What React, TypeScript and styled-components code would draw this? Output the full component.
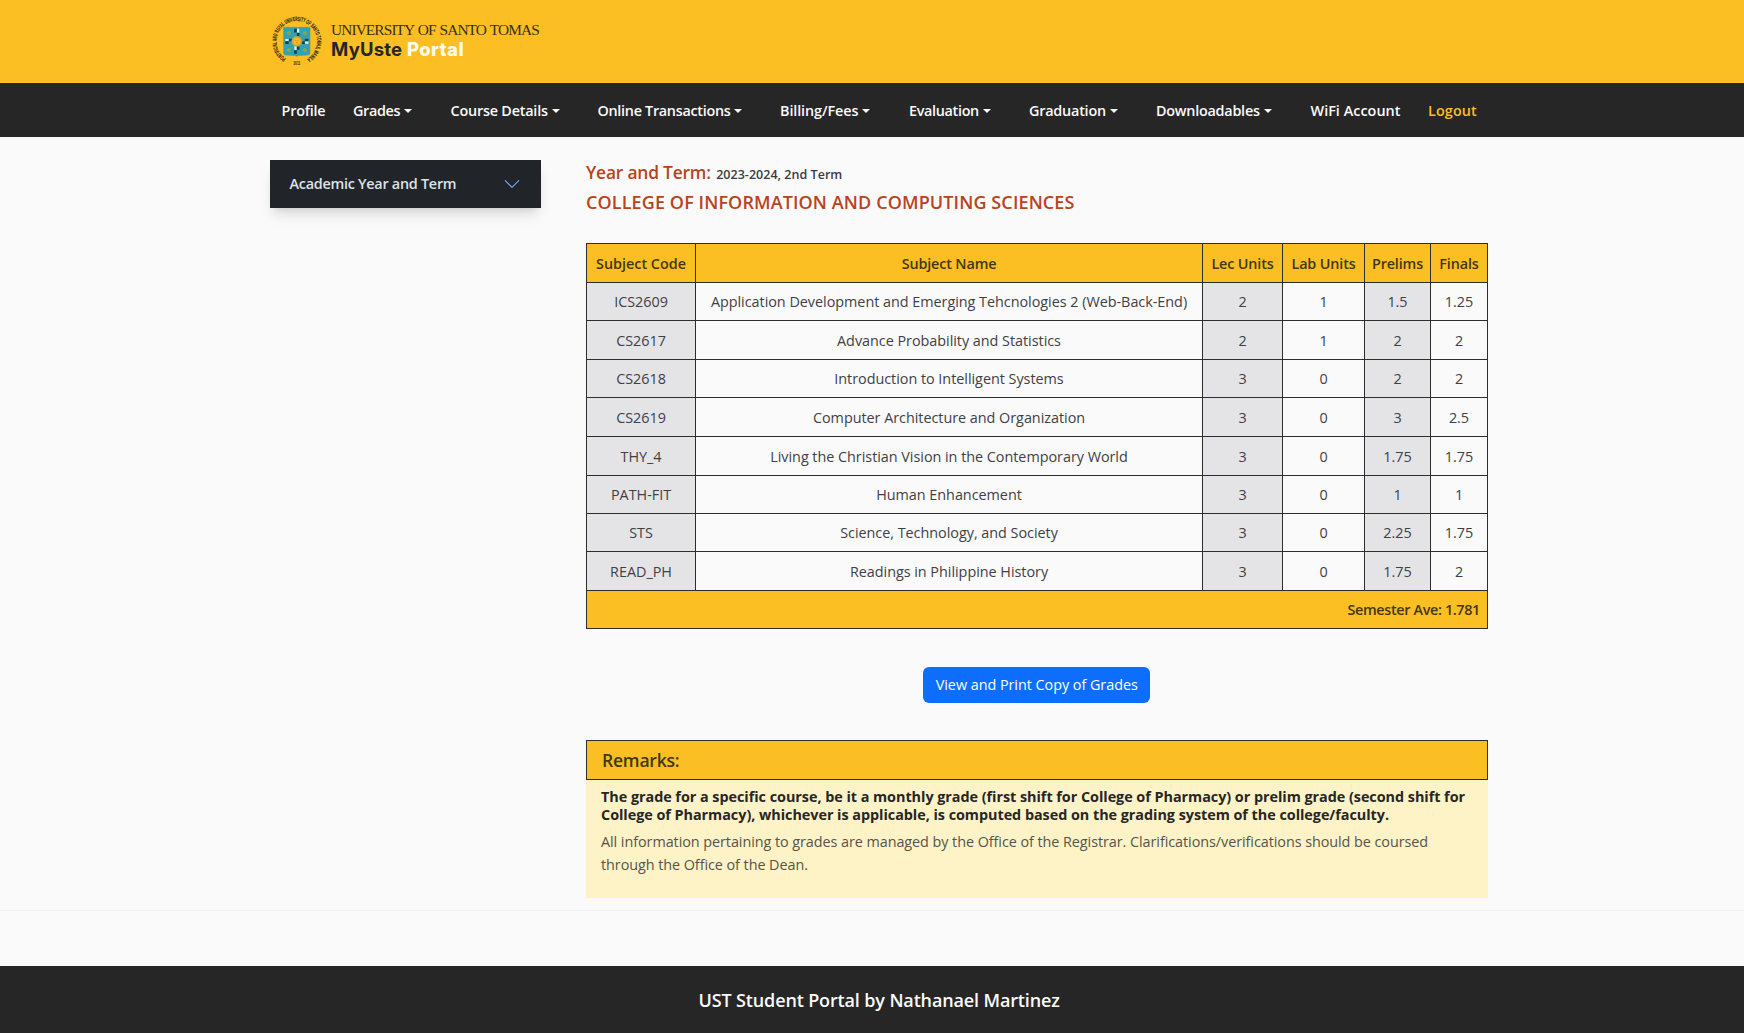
import React from 'react';
import styled, { createGlobalStyle } from 'styled-components';

const amber = '#fbbf24';
const ink = '#262626';
const line = '#2f2d29';

const GlobalStyle = createGlobalStyle`
  *, *::before, *::after { box-sizing: border-box; }
  body {
    margin: 0;
    background: #fafafa;
    color: #3f3f46;
    font: 400 14.4px/22.5px "Open Sans", "Noto Sans", sans-serif;
  }
  h1, h2, h3, p { margin: 0; font: inherit; }
`;

const Page = styled.div`
  display: flex;
  flex-direction: column;
  min-height: 1033px;
`;

const Container = styled.div`
  width: 1217.5px;
  margin-left: 270px;
`;

const Header = styled.header`
  height: 82.5px;
  background: ${amber};
`;

const Brand = styled(Container)`
  display: flex;
  padding-top: 15px;
`;

const BrandText = styled.div`
  display: flex;
  flex-direction: column;
  padding: 5.5px 0 0 8px;
`;

const University = styled.span`
  font: 400 15.4px/17px "Liberation Serif", serif;
  letter-spacing: -0.9px;
  word-spacing: 1px;
  white-space: nowrap;
  color: #3b300f;
`;

const PortalName = styled.h1`
  font: 700 18.5px/22px Inter, "Open Sans", sans-serif;
  letter-spacing: 0.2px;
  color: ${ink};
`;

const PortalAccent = styled.span`
  color: #fffbeb;
  font-weight: 800;
  letter-spacing: 0.4px;
`;

const Nav = styled.nav`
  height: 54.5px;
  background: ${ink};
`;

const NavGrid = styled(Container)`
  display: grid;
  grid-template-columns: 71.5px 97.5px 147px 182.5px 129px 120px 127px 154.5px 117.5px 1fr;
  padding: 16.5px 0 0 11.5px;
`;

const NavItem = styled.a<{ $menu?: boolean; $accent?: boolean; $track: number }>`
  display: flex;
  align-items: center;
  padding-top: ${p => (p.$menu ? 1 : 0)}px;
  color: ${p => (p.$accent ? amber : '#fafafa')};
  font-weight: 600;
  line-height: 22px;
  letter-spacing: ${p => p.$track}px;
  white-space: nowrap;
`;

const Caret = styled.span`
  margin: -1px 0 0 4px;
  border: 4px solid transparent;
  border-top-color: currentColor;
  border-bottom: 0;
`;

const Main = styled(Container)`
  display: grid;
  grid-template-columns: 271px 901.5px;
  justify-content: space-between;
  align-items: start;
  height: 773px;
  padding-top: 22.5px;
`;

const TermToggle = styled.button`
  display: flex;
  align-items: center;
  justify-content: space-between;
  height: 48.5px;
  padding: 0 20px 0 19.5px;
  border: 0;
  background: #212529;
  color: #dee2e6;
  font: 600 14.4px/22px "Open Sans", "Noto Sans", sans-serif;
  letter-spacing: -0.26px;
  box-shadow: 0 9px 14px -3px rgba(0, 0, 0, 0.13), 0 4px 6px -4px rgba(0, 0, 0, 0.12);
`;

const Content = styled.section`
  display: flex;
  flex-direction: column;
`;

const TermLine = styled.h2`
  height: 24px;
  color: #b9431c;
  font-size: 17.4px;
  font-weight: 600;
  line-height: 24px;
  letter-spacing: -0.2px;
`;

const TermValue = styled.span`
  margin-left: 1px;
  color: #3b3b40;
  font-size: 12.5px;
  line-height: 1;
  letter-spacing: 0.03px;
`;

const College = styled.h2`
  margin: 6px 0 29.5px;
  color: #b9431c;
  font-size: 18px;
  font-weight: 600;
  line-height: 24px;
  letter-spacing: 0.11px;
  white-space: nowrap;
`;

const GradeTable = styled.div`
  display: grid;
  grid-template-columns: 109px 507px 80px 82px 66px 57px;
  grid-template-rows: 39px 38px 39px 38px 39px 39px 38px 38px 39px 38px;
  width: 902px;
  border: solid ${line};
  border-width: 1px 0 0 1px;
`;

const Cell = styled.div<{ $shaded?: boolean }>`
  display: flex;
  align-items: center;
  justify-content: center;
  padding-top: 2px;
  border: solid ${line};
  border-width: 0 1px 1px 0;
  background: ${p => (p.$shaded ? '#e4e4e7' : 'transparent')};
  letter-spacing: -0.03px;
  white-space: nowrap;
`;

const HeadCell = styled(Cell)<{ $track?: number }>`
  background: ${amber};
  color: #443710;
  font-weight: 600;
  letter-spacing: ${p => p.$track ?? -0.15}px;
`;

const AverageCell = styled(HeadCell)`
  grid-column: 1 / -1;
  justify-content: flex-end;
  padding-right: 7px;
`;

const PrintButton = styled.button`
  align-self: center;
  width: 227px;
  height: 36px;
  margin: 38px 0 37px;
  padding: 0;
  border: 0;
  border-radius: 6px;
  background: #0d6efd;
  color: #fff;
  font: 400 14.4px/22px "Open Sans", "Noto Sans", sans-serif;
  letter-spacing: -0.04px;
`;

const RemarksTitle = styled.h3`
  height: 39.5px;
  padding-left: 15px;
  border: 1px solid ${line};
  background: ${amber};
  color: #443710;
  font-size: 17.6px;
  font-weight: 600;
  line-height: 39px;
  letter-spacing: -0.25px;
`;

const RemarksBody = styled.div`
  height: 118.5px;
  padding: 8.5px 0 0 15px;
  background: #fef3c7;
`;

const Rule = styled.strong`
  display: block;
  margin-bottom: 7px;
  color: ${ink};
  font-weight: 700;
  line-height: 18px;
  letter-spacing: -0.037px;
  white-space: nowrap;
`;

const Note = styled.p`
  color: #56534a;
  letter-spacing: -0.062px;
  white-space: nowrap;
`;

const Spacer = styled.div`
  height: 55.5px;
  border-top: 1px solid #f1f1f1;
`;

const Footer = styled.footer`
  flex: 1;
  padding: 22px 0 0 698.5px;
  background: ${ink};
  color: #fafafa;
  font-size: 18px;
  font-weight: 600;
  line-height: 24px;
  letter-spacing: -0.14px;
`;

const navItems = [
  { label: 'Profile', track: -0.2 },
  { label: 'Grades', menu: true, track: -0.37 },
  { label: 'Course Details', menu: true, track: -0.21 },
  { label: 'Online Transactions', menu: true, track: -0.3 },
  { label: 'Billing/Fees', menu: true, track: -0.1 },
  { label: 'Evaluation', menu: true, track: -0.33 },
  { label: 'Graduation', menu: true, track: -0.22 },
  { label: 'Downloadables', menu: true, track: -0.25 },
  { label: 'WiFi Account', track: 0.03 },
  { label: 'Logout', accent: true, track: 0.1 },
];

const grades = [
  ['ICS2609', 'Application Development and Emerging Tehcnologies 2 (Web-Back-End)', '2', '1', '1.5', '1.25'],
  ['CS2617', 'Advance Probability and Statistics', '2', '1', '2', '2'],
  ['CS2618', 'Introduction to Intelligent Systems', '3', '0', '2', '2'],
  ['CS2619', 'Computer Architecture and Organization', '3', '0', '3', '2.5'],
  ['THY_4', 'Living the Christian Vision in the Contemporary World', '3', '0', '1.75', '1.75'],
  ['PATH-FIT', 'Human Enhancement', '3', '0', '1', '1'],
  ['STS', 'Science, Technology, and Society', '3', '0', '2.25', '1.75'],
  ['READ_PH', 'Readings in Philippine History', '3', '0', '1.75', '2'],
];

function Seal() {
  return (
    <svg width="53" height="53" viewBox="-26.8 -26.3 53 53">
      <defs>
        <path id="ring" d="M-10.8 17.2 A20.3 20.3 0 1 1 10.8 17.2" />
      </defs>
      <text fontFamily="Liberation Sans, sans-serif" fontWeight="700" fontSize="6" fill="#33290a" stroke="#33290a" strokeWidth=".15">
        <textPath href="#ring" textLength="105" lengthAdjust="spacingAndGlyphs">
          PONTIFICAL AND ROYAL UNIVERSITY OF SANTO TOMAS, MANILA
        </textPath>
      </text>
      <text x="-3.5" y="24.2" fontFamily="Liberation Sans, sans-serif" fontWeight="700" fontSize="5.4" textLength="7" lengthAdjust="spacingAndGlyphs" fill="#33290a">1611</text>
      <path d="M-13.2 -14 H13.2 V12 Q13.2 13.6 11 13.8 L2 14.2 L0 15 L-2 14.2 L-11 13.8 Q-13.2 13.6 -13.2 12Z" fill="#2fa3b5" stroke="#6f9a5c" strokeWidth=".6" />
      <g fill="#1f3a48">
        <path d="M-2.6 -12.5h2.6v3.6h-2.6zM0 -8.2h2.6v3.2H0zM0 5h2.6v3.4H0zM-2.6 9h2.6v3.4h-2.6zM-11.5 0h3.4v2.6h-3.4zM-8 -2.6h3v2.6h-3zM5 0h3v2.6H5zM8 -2.6h3.6V0H8z" />
      </g>
      <g fill="#e6efe9">
        <path d="M.2 -12.5h2.2v3.8H.2zM-2.4 5h2.2v3.6h-2.2zM-11.5 -2.4h3.3v2.2h-3.3zM8.2 .2h3.4v2.2H8.2z" />
      </g>
      <g fill="#8fa34f">
        <circle cx="-8" cy="-8.4" r="2" />
        <circle cx="8" cy="-8.4" r="2" />
        <circle cx="-8" cy="8.6" r="2" />
        <circle cx="8" cy="8.6" r="2" />
      </g>
      <circle r="4.8" fill="#e9a81f" stroke="#d2a53a" strokeWidth="1.4" strokeDasharray="1 .9" />
      <circle r="3.2" fill="#f5bd2c" />
      <path d="M-1.5 -.8h1M.6 -.8h1M-1 1.4h2" stroke="#b5761a" strokeWidth=".6" />
    </svg>
  );
}

export default function App() {
  return (
    <Page>
      <GlobalStyle />
      <Header>
        <Brand>
          <Seal />
          <BrandText>
            <University>UNIVERSITY OF SANTO TOMAS</University>
            <PortalName>
              MyUste <PortalAccent>Portal</PortalAccent>
            </PortalName>
          </BrandText>
        </Brand>
      </Header>
      <Nav>
        <NavGrid>
          {navItems.map(item => (
            <NavItem key={item.label} $menu={item.menu} $accent={item.accent} $track={item.track}>
              {item.label}
              {item.menu && <Caret />}
            </NavItem>
          ))}
        </NavGrid>
      </Nav>
      <Main>
        <TermToggle>
          Academic Year and Term
          <svg width="18" height="18" viewBox="0 0 16 16" fill="none" stroke="#6ea8fe" strokeLinecap="round" strokeLinejoin="round">
            <path d="M2 5l6 6 6-6" />
          </svg>
        </TermToggle>
        <Content>
          <TermLine>
            Year and Term: <TermValue>2023-2024, 2nd Term</TermValue>
          </TermLine>
          <College>COLLEGE OF INFORMATION AND COMPUTING SCIENCES</College>
          <GradeTable>
            <HeadCell $track={0}>Subject Code</HeadCell>
            <HeadCell>Subject Name</HeadCell>
            <HeadCell>Lec Units</HeadCell>
            <HeadCell>Lab Units</HeadCell>
            <HeadCell>Prelims</HeadCell>
            <HeadCell>Finals</HeadCell>
            {grades.map(row =>
              row.map((value, i) => (
                <Cell key={row[0] + i} $shaded={i % 2 === 0}>
                  {value}
                </Cell>
              )),
            )}
            <AverageCell $track={-0.35}>Semester Ave: 1.781</AverageCell>
          </GradeTable>
          <PrintButton>View and Print Copy of Grades</PrintButton>
          <RemarksTitle>Remarks:</RemarksTitle>
          <RemarksBody>
            <Rule>
              The grade for a specific course, be it a monthly grade (first shift for College of Pharmacy) or prelim grade (second shift for
              <br />
              College of Pharmacy), whichever is applicable, is computed based on the grading system of the college/faculty.
            </Rule>
            <Note>
              All information pertaining to grades are managed by the Office of the Registrar. Clarifications/verifications should be coursed
              <br />
              through the Office of the Dean.
            </Note>
          </RemarksBody>
        </Content>
      </Main>
      <Spacer />
      <Footer>UST Student Portal by Nathanael Martinez</Footer>
    </Page>
  );
}
